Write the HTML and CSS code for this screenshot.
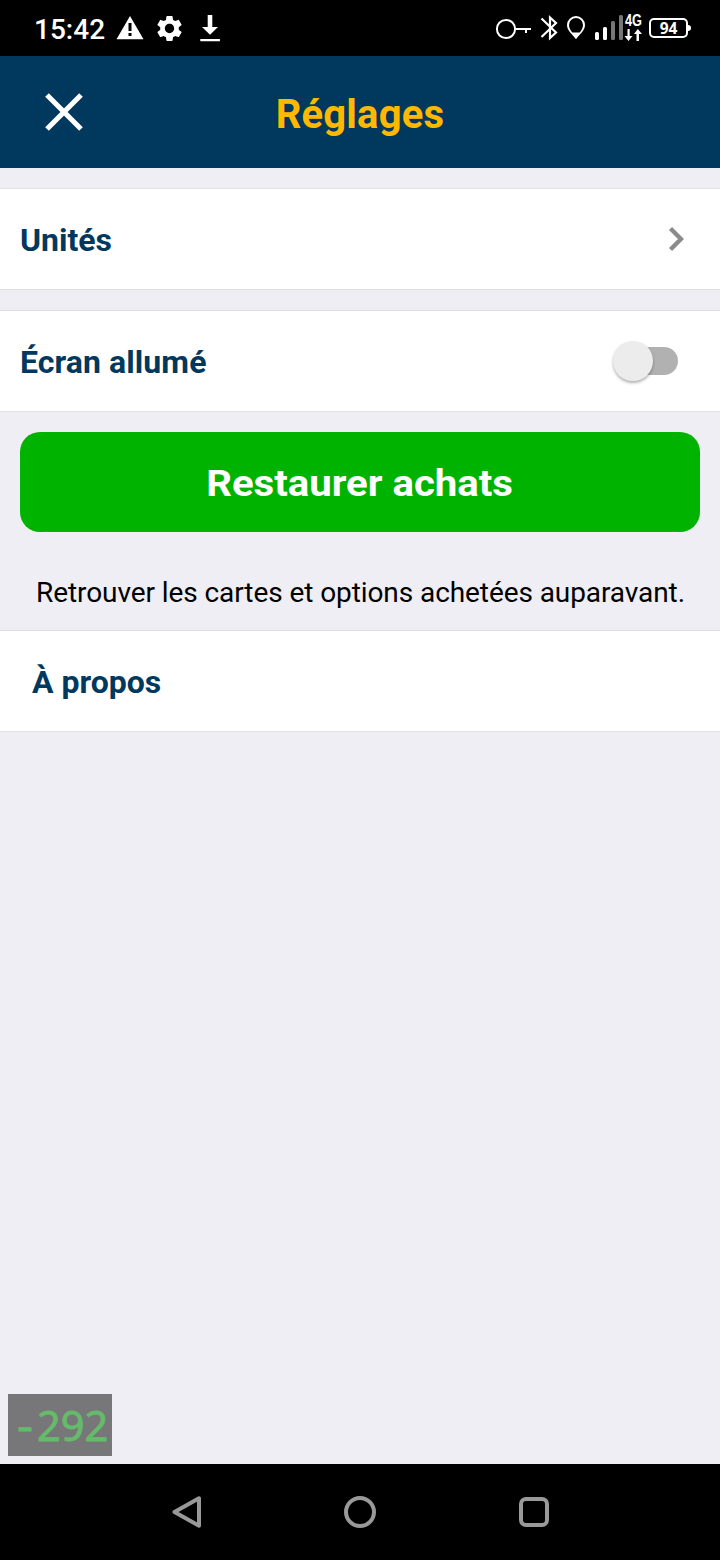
FILE: index.html
```html
<!DOCTYPE html>
<html lang="fr">
<head>
    <meta charset="UTF-8">
    <meta name="viewport" content="width=device-width, initial-scale=1.0">
    <title>Réglages</title>
    <link rel="stylesheet" href="styles.css">
</head>
<body>
    <div class="screen">
        <div class="status-bar">
            <div class="status-left">
                <span class="time">15:42</span>
                <svg class="icon-warning" width="28" height="56" viewBox="0 0 28 56">
                    <path fill="#fff" fill-rule="evenodd" d="M14 16 27.500 39.300H.5zM12.500 23v8h3v-8zm0 10v3h3v-3z"/>
                </svg>
                <svg class="icon-gear" width="31" height="31" viewBox="0 0 24 24">
                    <path fill="#fff" d="M19.140 12.940c.04-.3.06-.61.06-.94 0-.32-.02-.64-.07-.94l2.030-1.580c.18-.14.23-.41.12-.61l-1.920-3.320c-.12-.22-.37-.29-.59-.22l-2.390.96c-.5-.38-1.030-.7-1.620-.94l-.36-2.540c-.04-.24-.24-.41-.48-.41h-3.840c-.24 0-.43.17-.47.41l-.36 2.540c-.59.24-1.130.57-1.620.94l-2.390-.96c-.22-.08-.47 0-.59.22L2.740 8.870c-.12.21-.08.47.12.61l2.030 1.580c-.05.3-.09.63-.09.94s.02.64.07.94l-2.030 1.580c-.18.14-.23.41-.12.61l1.920 3.320c.12.22.37.29.59.22l2.390-.96c.5.38 1.030.7 1.620.94l.36 2.540c.05.24.24.41.48.41h3.840c.24 0 .44-.17.47-.41l.36-2.540c.59-.24 1.130-.56 1.620-.94l2.390.96c.22.08.47 0 .59-.22l1.920-3.320c.12-.22.07-.47-.12-.61l-2.010-1.580zM12 15.600c-1.980 0-3.600-1.620-3.600-3.600s1.620-3.600 3.600-3.600 3.600 1.620 3.600 3.600-1.620 3.600-3.600 3.600z"/>
                </svg>
                <svg class="icon-download" width="20" height="56" viewBox="0 0 20 56">
                    <path fill="#fff" d="M7.700 15h4.600v12h5.700l-8 7.700L2 27h5.700zM.3 39h19.600v2.300H.3z"/>
                </svg>
            </div>
            <div class="status-right">
                <svg width="42" height="56" viewBox="0 0 42 56" fill="none" stroke="#fff" stroke-width="2">
                    <circle cx="11" cy="29" r="9.100"/>
                    <path d="M20 29h16M31 29v4"/>
                </svg>
                <svg width="28" height="56" viewBox="0 0 28 56" fill="none" stroke="#fff" stroke-width="2.200">
                    <path d="m4.500 18.500 14.500 14-6 5.500v-20.500l6 5.500-14.500 14"/>
                </svg>
                <svg width="30" height="56" viewBox="0 0 30 56">
                    <path fill="#fff" fill-rule="evenodd" d="M11 16a9 9 0 0 0-9 9c0 5.500 5 9 9 14.200 4-5.200 9-8.700 9-14.200a9 9 0 0 0-9-9zm0 2a7 7 0 0 1 7 7c0 3-1.500 5-3.300 7.500H7.300C5.500 30 4 28 4 25a7 7 0 0 1 7-7z"/>
                </svg>
                <svg width="29" height="56" viewBox="0 0 29 56">
                    <rect x="0" y="32" width="4" height="8" rx="1.500" fill="#fff"/>
                    <rect x="8" y="27" width="4" height="13" rx="1.500" fill="#fff"/>
                    <rect x="16" y="21" width="4" height="19" rx="1.500" fill="#777"/>
                    <rect x="24" y="15" width="4" height="25" rx="1.500" fill="#777"/>
                </svg>
                <svg width="25" height="56" viewBox="0 0 25 56">
                    <text class="network" x="1" y="26" textLength="17" lengthAdjust="spacingAndGlyphs">4G</text>
                    <path fill="#fff" d="M3.500 29h2.200v7h2.800l-4 5-4-5h3zM12.500 41h2.500v-7h3l-4.200-5-3.800 5h2.500z"/>
                </svg>
                <span class="battery">94</span>
            </div>
        </div>

        <div class="header">
            <svg class="close" width="40" height="40" viewBox="0 0 40 40">
                <path d="M3 3l34 34M37 3L3 37" stroke="#fff" stroke-width="5.200"/>
            </svg>
            <h1>Réglages</h1>
        </div>

        <div class="content">
            <div class="row">
                <span>Unités</span>
                <svg class="chevron" width="16" height="26" viewBox="0 0 16 26">
                    <path d="M2.500 2.500 13 13 2.500 23.500" fill="none" stroke="#8b8b8b" stroke-width="4.400"/>
                </svg>
            </div>
            <div class="row">
                <span class="wide">Écran allumé</span>
                <div class="switch"><div class="thumb"></div></div>
            </div>
            <button class="btn-restore"><span>Restaurer achats</span></button>
            <p class="hint">Retrouver les cartes et options achetées auparavant.</p>
            <div class="row about">
                <span>À propos</span>
            </div>
            <div class="counter"><span class="minus">-</span>292</div>
        </div>

        <div class="nav-bar">
            <svg width="32" height="34" viewBox="0 0 32 34">
                <path d="M29 3.300v27.400L4.500 17z" fill="none" stroke="#999" stroke-width="4" stroke-linejoin="round"/>
            </svg>
            <div class="nav-home"></div>
            <div class="nav-recent"></div>
        </div>
    </div>
</body>
</html>
```
FILE: styles.css
```css
* {
    margin: 0;
    padding: 0;
    box-sizing: border-box;
    font-family: Roboto, sans-serif;
}

svg {
    display: block;
    flex-shrink: 0;
}

.screen {
    display: flex;
    flex-direction: column;
    height: 1560px;
    background: #efeef4;
}

.status-bar {
    display: flex;
    justify-content: space-between;
    height: 56px;
    padding: 0 32px 0 34px;
    background: #000;
    color: #fff;
}

.status-left,
.status-right {
    display: flex;
    align-items: center;
}

.time {
    width: 82px;
    padding-top: 2px;
    font-size: 28px;
    font-weight: 500;
}

.icon-gear {
    margin: 0 14.600px 0 10.400px;
}

.network {
    font-family: "Liberation Sans", sans-serif;
    font-size: 16px;
    font-weight: bold;
    fill: #fff;
}

.battery {
    position: relative;
    width: 39px;
    height: 20px;
    border: 2px solid #fff;
    border-radius: 5px;
    font-family: "Open Sans", sans-serif;
    font-size: 15.500px;
    font-weight: bold;
    line-height: 17px;
    text-align: center;
}

.battery::after {
    content: "";
    position: absolute;
    top: 5px;
    right: -5px;
    width: 3px;
    height: 6px;
    border-radius: 0 3px 3px 0;
    background: #fff;
}

.header {
    display: grid;
    grid-template-columns: 128px 1fr 128px;
    align-items: center;
    height: 112px;
    background: #00395d;
}

.close {
    justify-self: center;
}

.header h1 {
    padding-top: 4px;
    font-size: 40px;
    font-weight: 700;
    letter-spacing: 0.2px;
    color: #ffb800;
    text-align: center;
}

.content {
    position: relative;
    flex: 1;
    padding-top: 20px;
}

.row {
    display: flex;
    justify-content: space-between;
    align-items: center;
    height: 102px;
    margin-bottom: 20px;
    padding: 0 20px;
    border-top: 1px solid #e1e0e5;
    border-bottom: 1px solid #e1e0e5;
    background: #fff;
    font-size: 32px;
    font-weight: 700;
    color: #00395d;
}

.row span {
    padding-top: 2px;
}

.row .wide {
    letter-spacing: 0.08px;
}

.chevron {
    margin-right: 16px;
}

.switch {
    display: flex;
    align-items: center;
    width: 62px;
    height: 28px;
    margin-right: 22px;
    border-radius: 14px;
    background: #b1b1b1;
}

.thumb {
    width: 40px;
    height: 40px;
    margin-left: -3px;
    flex-shrink: 0;
    border-radius: 50%;
    background: #ececec;
    box-shadow: 0 2px 3px rgba(0, 0, 0, 0.3);
}

.btn-restore {
    display: block;
    width: 680px;
    height: 100px;
    margin: 0 auto;
    padding-top: 3px;
    border: none;
    border-radius: 20px;
    background: #00b300;
    color: #fff;
    font-size: 36px;
    font-weight: 700;
}

.btn-restore span {
    display: inline-block;
    transform: scaleX(1.115);
}

.hint {
    height: 98px;
    padding: 44px 0 0 1px;
    font-size: 28px;
    line-height: 33px;
    letter-spacing: -0.08px;
    text-align: center;
    color: #000;
}

.about {
    padding-left: 32px;
}

/* debug counter */
.counter {
    position: absolute;
    left: 8px;
    bottom: 8px;
    display: flex;
    width: 104px;
    height: 62px;
    padding-left: 5px;
    background: #777779;
    color: #66bb6a;
    font-family: "Noto Sans", sans-serif;
    font-size: 41.500px;
    line-height: 62px;
    -webkit-text-stroke: 0.8px #66bb6a;
}

.minus {
    width: 24px;
    font-family: inherit;
    text-align: center;
    transform: scaleX(1.2);
}

.nav-bar {
    display: flex;
    align-items: center;
    height: 96px;
    padding-left: 170px;
    background: #000;
}

.nav-home {
    width: 32px;
    height: 32px;
    margin-left: 142px;
    border: 4px solid #999;
    border-radius: 50%;
}

.nav-recent {
    width: 30px;
    height: 30px;
    margin-left: 143px;
    border: 4px solid #999;
    border-radius: 7px;
}
```
